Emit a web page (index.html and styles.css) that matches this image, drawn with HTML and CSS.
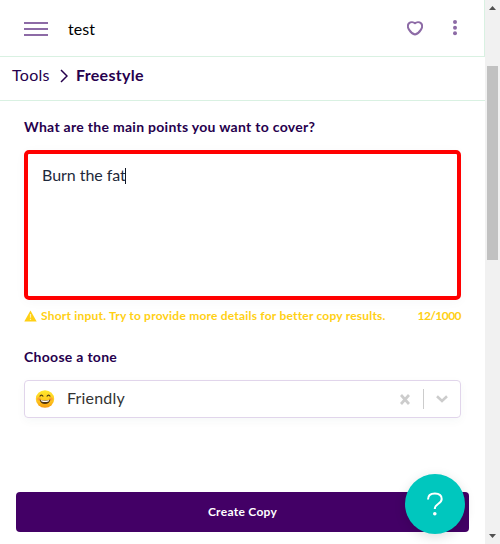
FILE: index.html
```html
<!DOCTYPE html>
<html lang="en">
<head>
<meta charset="utf-8">
<title>Freestyle</title>
<link rel="stylesheet" href="styles.css">
</head>
<body>
<div class="app">
  <main class="page">
    <header class="topbar">
      <svg class="menu" width="24" height="14" viewBox="0 0 24 14"><path d="M0 1h24M0 7h24M0 13h24" stroke="#8d6ba6" stroke-width="2"/></svg>
      <span class="project">test</span>
      <svg class="heart" width="16" height="15" viewBox="0 0 16 15"><path d="M8 2.300C6.500.9 3.700.6 2 2.300.4 4 .8 6.800 2.200 8.900c1.300 2 3.300 4.100 5.800 4.600 2.500-.5 4.500-2.600 5.800-4.600C15.200 6.800 15.600 4 14 2.300 12.300.6 9.500.9 8 2.300Z" fill="none" stroke="#8d6ba6" stroke-width="2" stroke-linejoin="round"/></svg>
      <svg class="dots" width="4" height="16" viewBox="0 0 4 16" fill="#8d6ba6"><circle cx="2" cy="2" r="2"/><circle cx="2" cy="7.700" r="2"/><circle cx="2" cy="13.300" r="2"/></svg>
    </header>
    <nav class="crumbs">
      <span class="crumb">Tools</span>
      <svg class="crumb-arrow" width="8" height="14" viewBox="0 0 8 14"><path d="M1 1l6 6-6 6" fill="none" stroke="#26004d" stroke-width="1.500"/></svg>
      <span class="crumb-current">Freestyle</span>
    </nav>
    <section class="form">
      <label class="label">What are the main points you want to cover?</label>
      <div class="textbox"><span class="typed">Burn the fat</span><span class="caret"></span></div>
      <div class="hint">
        <svg width="13" height="12" viewBox="0 0 13 12"><path d="M6.500.6 12.700 11.400H.3Z" fill="#ffd014"/><path d="M6.500 4v3.800M6.500 8.700v1.400" stroke="#fff0ae" stroke-width="1.200"/></svg>
        <span class="warning">Short input. Try to provide more details for better copy results.</span>
        <span class="count">12/1000</span>
      </div>
      <label class="label tone">Choose a tone</label>
      <div class="select">
        <svg class="emoji" width="20" height="18" viewBox="0 0 20 18">
          <defs><linearGradient id="face" x1="0" y1="0" x2="0" y2="1"><stop offset="0" stop-color="#ffe82d"/><stop offset=".6" stop-color="#ffc91e"/><stop offset="1" stop-color="#f59a13"/></linearGradient></defs>
          <ellipse cx="10" cy="9" rx="9.200" ry="8.700" fill="url(#face)"/>
          <circle cx="4" cy="9" r="1.800" fill="#f98a38" opacity=".65"/><circle cx="16" cy="9" r="1.800" fill="#f98a38" opacity=".65"/>
          <path d="M4.700 6.500q1.700-2.800 3.500 0M11.800 6.500q1.700-2.800 3.500 0" fill="none" stroke="#4b3a12" stroke-width="1.200"/>
          <path d="M4.500 9.500q5.500 2 11 0-1.200 4.500-5.500 4.500T4.500 9.500Z" fill="#51340f"/><path d="M5.700 10.100q4.300 1.500 8.600 0l-.8 1.300q-3.500 1-7 0Z" fill="#fff"/>
        </svg>
        <span class="value">Friendly</span>
        <svg class="clear" width="10" height="11" viewBox="0 0 10 11"><path d="M1 1l8 9M9 1L1 10" stroke="#ccc" stroke-width="2.700"/></svg>
        <span class="divider"></span>
        <svg width="12" height="8" viewBox="0 0 12 8"><path d="M1 1.300l5 4.700 5-4.700" fill="none" stroke="#ccc" stroke-width="2.600"/></svg>
      </div>
    </section>
    <div class="create">Create Copy</div>
    <div class="help"><svg width="18" height="26" viewBox="0 0 18 26"><path d="M2 8.600C2 4.500 5 2.500 8.900 2.500c4 0 6.800 2 6.800 5.500 0 5-6.900 4.500-6.900 9.900" fill="none" stroke="#fff" stroke-width="2"/><circle cx="8.800" cy="22.800" r="1.800" fill="#fff"/></svg></div>
  </main>
  <div class="scrollbar">
    <svg width="7" height="4" viewBox="0 0 7 4"><path d="M0 4 3.500 0 7 4Z" fill="#505050"/></svg>
    <div class="thumb"></div>
    <svg class="down" width="7" height="4" viewBox="0 0 7 4"><path d="M0 0 3.500 4 7 0Z" fill="#505050"/></svg>
  </div>
</div>
</body>
</html>
```
FILE: styles.css
```css
* { box-sizing: border-box; }
body { margin: 0; background: #fff; font-family: Lato, "Liberation Sans", sans-serif; color: #26004d; overflow: hidden; }
svg { display: block; flex: none; }
span { white-space: nowrap; }
.app { display: flex; width: 500px; height: 544px; }
.page { position: relative; width: 485px; }
.topbar { display: flex; align-items: center; height: 57px; padding: 2px 27px 0 24px; border-bottom: 1px solid #d9f1e2; border-right: 1px solid #d9f1e2; }
.project { flex: 1; margin-left: 20px; padding-bottom: 2px; font-size: 16px; color: #000; letter-spacing: .1px; }
.heart { margin-bottom: 2px; }
.dots { margin: 0 0 2px 30px; }
.crumbs { display: flex; align-items: center; height: 44px; padding: 0 12px 6px; font-size: 16px; border-bottom: 1px solid #d9f1e2; }
.crumb-arrow { margin: 0 8px 0 11px; }
.crumb { width: 37px; padding-bottom: 2px; letter-spacing: .3px; }
.crumb-current { padding-bottom: 2px; font-weight: 700; letter-spacing: .29px; }
.form { padding: 16px 24px 0; }
.label { display: block; height: 20px; line-height: 20px; font-size: 14px; font-weight: 700; letter-spacing: .29px; }
.textbox { display: flex; height: 150px; margin-top: 13px; padding: 11px 14px; border: 4px solid #f00; border-radius: 5px; font-size: 16px; line-height: 20px; color: #1e293b; box-shadow: 0 2px 12px #003d5c08; }
.typed { width: 83px; letter-spacing: -.05px; }
.caret { width: 1px; height: 16px; margin-top: 3px; background: #111827; }
.hint { display: flex; align-items: center; height: 16px; margin-top: 8px; color: #ffd014; font-size: 12px; font-weight: 700; }
.hint svg { margin-right: 4px; }
.warning { padding-bottom: 2px; letter-spacing: .21px; }
.count { margin-left: auto; padding-bottom: 2px; letter-spacing: -.55px; }
.tone { margin-top: 23px; }
.select { display: flex; align-items: center; height: 38px; margin-top: 13px; padding: 0 12px 0 10px; border: 1px solid #e1d5eb; border-radius: 4px; color: #333; font-size: 16px; box-shadow: 0 3px 10px #004f4f0a; }
.emoji { margin-bottom: 1px; }
.value { flex: 1; margin-left: 12px; padding-bottom: 3px; letter-spacing: .18px; }
.divider { width: 1px; height: 20px; margin: 0 12px 0 13px; background: #ccc; }
.create { display: flex; align-items: center; justify-content: center; height: 40px; margin: 74px 16px 0; padding-bottom: 2px; border-radius: 4px; background: #430066; color: #fff; font-size: 12px; font-weight: 700; letter-spacing: .29px; }
.help { position: absolute; left: 405px; top: 474px; display: flex; align-items: center; justify-content: center; width: 60px; height: 60px; border-radius: 50%; background: #00c7be; box-shadow: 0 3px 12px #0002; }
.scrollbar { display: flex; flex-direction: column; align-items: center; width: 15px; padding: 6px 0; background: #f1f1f1; }
.thumb { width: 11px; height: 194px; margin-top: 56px; background: #c1c1c1; }
.down { margin-top: auto; }
```
